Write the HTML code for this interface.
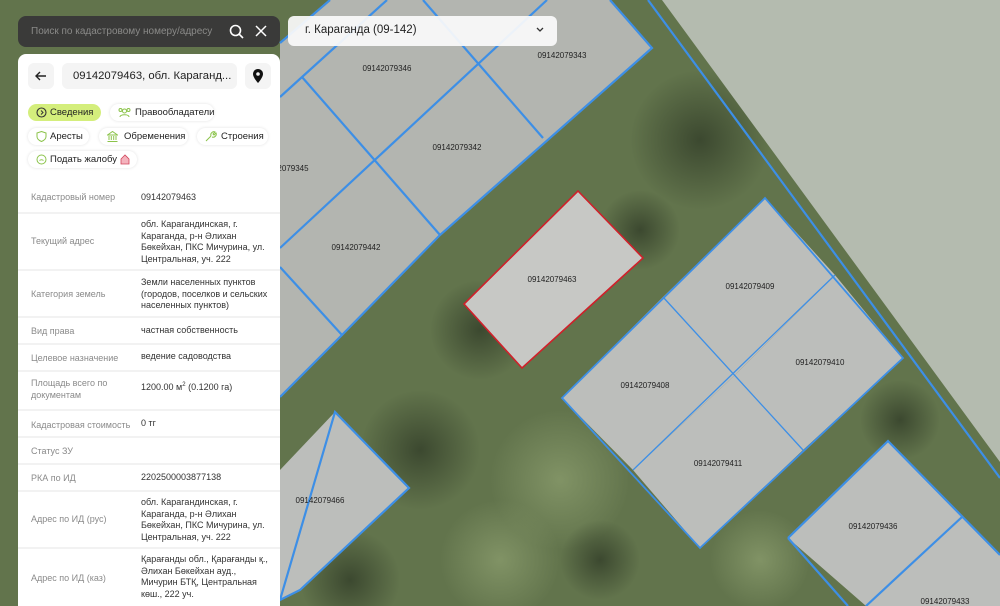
<!DOCTYPE html>
<html><head><meta charset="utf-8"><style>
*{margin:0;padding:0;box-sizing:border-box}
html,body{width:1000px;height:606px;overflow:hidden}
body{position:relative;font-family:"Liberation Sans",sans-serif;background:#5f7049}
#map{position:absolute;left:0;top:0}
.search{position:absolute;left:18px;top:16px;width:262px;height:31px;background:#3a3a39;border-radius:8px}
.search span{position:absolute;left:13px;top:10px;font-size:10px;color:#8a8a88}
.dd{position:absolute;left:288px;top:16px;width:269px;height:30px;background:rgba(250,250,250,.93);border-radius:6px}
.dd span{position:absolute;left:17px;top:8px;font-size:11.5px;color:#222}
.panel{position:absolute;left:18px;top:54px;width:262px;height:552px;background:#fff;border-radius:8px 8px 0 0;overflow:hidden}
.btn{position:absolute;top:9px;height:26px;background:#f4f4f4;border-radius:6px}
.title{position:absolute;left:44px;top:9px;width:175px;height:26px;background:#f4f4f4;border-radius:6px;font-size:11.3px;color:#1e1e1e;line-height:26px;padding-left:11px;white-space:nowrap;overflow:hidden}
.chip{position:absolute;height:17px;border-radius:9px;background:#fff;box-shadow:0 0 3px rgba(0,0,0,.12);font-size:9.5px;color:#222;line-height:17px;padding-left:22px;white-space:nowrap}
.chip svg{position:absolute;left:8px;top:3px}
.row{position:absolute;left:0;width:262px;border-top:2px solid #f2f2f2;font-size:9px;line-height:11.5px}
.row .l{position:absolute;left:13px;color:#8a8a8a}
.row .v{position:absolute;left:123px;width:132px;color:#333}
.lbl{font-size:8px;fill:#222;font-family:"Liberation Sans",sans-serif}
</style></head><body>
<svg id="map" width="1000" height="606" viewBox="0 0 1000 606">
<defs>
<radialGradient id="dk"><stop offset="0" stop-color="#2f3a26" stop-opacity=".75"/><stop offset="1" stop-color="#2f3a26" stop-opacity="0"/></radialGradient>
<radialGradient id="lt"><stop offset="0" stop-color="#8ea070" stop-opacity=".7"/><stop offset="1" stop-color="#8ea070" stop-opacity="0"/></radialGradient>
</defs>
<rect width="1000" height="606" fill="#62744c"/>
<circle cx="700" cy="140" r="70" fill="url(#dk)"/>
<circle cx="480" cy="330" r="50" fill="url(#dk)"/>
<circle cx="420" cy="450" r="60" fill="url(#dk)"/>
<circle cx="560" cy="480" r="70" fill="url(#lt)"/>
<circle cx="500" cy="560" r="60" fill="url(#lt)"/>
<circle cx="640" cy="230" r="40" fill="url(#dk)"/>
<circle cx="350" cy="580" r="50" fill="url(#dk)"/>
<circle cx="760" cy="560" r="50" fill="url(#lt)"/>
<circle cx="600" cy="560" r="40" fill="url(#dk)"/>
<circle cx="900" cy="420" r="40" fill="url(#dk)"/>
<polygon points="662,0 1000,0 1000,462" fill="#b4bbaf"/>
<polygon points="330,0 610,0 652,48 440,235 342,335 280,397 280,43" fill="#b3b5b0"/>
<polygon points="765,198 835,275 735,375 663,297" fill="#bcbebb"/>
<polygon points="835,275 903,358 803,450 735,375" fill="#bcbebb"/>
<polygon points="663,297 735,375 633,470 562,398" fill="#bcbebb"/>
<polygon points="735,375 803,450 700,548 633,470" fill="#bcbebb"/>
<polygon points="888,441 962,517 866,606 788,538" fill="#bcbebb"/>
<polygon points="962,517 1000,555 1000,606 866,606" fill="#bcbebb"/>
<polygon points="335,412 409,488 300,590 280,600 280,470" fill="#bcbebb"/>
<polygon points="578,191 643,258 522,368 464,304" fill="#c7c8c5" stroke="#d0202a" stroke-width="1.6"/>
<g stroke="#3d8fe6" fill="none" stroke-width="2.2">
<line x1="648" y1="0" x2="1000" y2="478"/>
<polyline points="610,0 652,48 440,235 342,335 280,397"/>
<line x1="280" y1="43" x2="330" y2="0"/>
<line x1="302" y1="77" x2="440" y2="235"/>
<line x1="423" y1="0" x2="543" y2="138"/>
<line x1="280" y1="267" x2="342" y2="335"/>
<line x1="280" y1="97" x2="387" y2="0"/>
<line x1="280" y1="248" x2="547" y2="0"/>
<polygon points="335,412 409,488 300,590 280,600"/>
<polygon points="765,198 903,358 700,548 562,398" stroke-width="1.8"/>
<line x1="663" y1="297" x2="803" y2="450" stroke-width="1.3"/>
<line x1="835" y1="275" x2="633" y2="470" stroke-width="1.3"/>
<polyline points="788,538 888,441 1000,555"/>
<line x1="962" y1="517" x2="866" y2="606"/>
<line x1="788" y1="538" x2="848" y2="606"/>
</g>
<g class="lbl" text-anchor="middle">
<text x="387" y="71">09142079346</text>
<text x="562" y="58">09142079343</text>
<text x="457" y="150">09142079342</text>
<text x="293" y="171">2079345</text>
<text x="356" y="250">09142079442</text>
<text x="552" y="282">09142079463</text>
<text x="750" y="289">09142079409</text>
<text x="820" y="365">09142079410</text>
<text x="645" y="388">09142079408</text>
<text x="718" y="466">09142079411</text>
<text x="320" y="503">09142079466</text>
<text x="873" y="529">09142079436</text>
<text x="945" y="604">09142079433</text>
</g>
</svg>

<div class="search"><span>Поиск по кадастровому номеру/адресу</span>
<svg style="position:absolute;left:211px;top:8px" width="15" height="15" viewBox="0 0 15 15"><circle cx="6.5" cy="6.5" r="5" stroke="#fff" stroke-width="1.6" fill="none"/><line x1="10.2" y1="10.2" x2="14" y2="14" stroke="#fff" stroke-width="1.6"/></svg>
<svg style="position:absolute;left:237px;top:9px" width="12" height="12" viewBox="0 0 12 12"><path d="M1 1L11 11M11 1L1 11" stroke="#fff" stroke-width="1.5"/></svg>
</div>
<div class="dd"><span>г. Караганда (09-142)</span>
<svg style="position:absolute;left:248px;top:11px" width="8" height="6" viewBox="0 0 8 6"><path d="M1 1L4 4L7 1" stroke="#333" stroke-width="1.3" fill="none"/></svg></div>

<div class="panel">
<div class="btn" style="left:10px;width:26px"><svg style="position:absolute;left:7px;top:8px" width="12" height="10" viewBox="0 0 12 10"><path d="M11 5H1.5M5 1L1 5L5 9" stroke="#222" stroke-width="1.4" fill="none"/></svg></div>
<div class="title">09142079463, обл. Караганд...</div>
<div class="btn" style="left:227px;width:26px"><svg style="position:absolute;left:8px;top:6px" width="10" height="14" viewBox="0 0 10 14"><path d="M5 0C2.2 0 0 2.2 0 5C0 8.5 5 14 5 14C5 14 10 8.5 10 5C10 2.2 7.8 0 5 0Z" fill="#111"/><circle cx="5" cy="5" r="1.8" fill="#f4f4f4"/></svg></div>

<div class="chip" style="left:10px;top:50px;width:73px;background:#d4ee7c;box-shadow:none">Сведения<svg width="11" height="11"><circle cx="5.5" cy="5.5" r="4.5" stroke="#333" fill="none" stroke-width="1.1"/><path d="M5 3.5L7 5.5L5 7.5" stroke="#333" fill="none"/></svg></div>
<div class="chip" style="left:92px;top:50px;width:104px;padding-left:25px">Правообладатели<svg width="13" height="11"><circle cx="6.5" cy="4" r="2" fill="none" stroke="#8bc34a"/><circle cx="2.5" cy="3" r="1.5" fill="none" stroke="#8bc34a"/><circle cx="10.5" cy="3" r="1.5" fill="none" stroke="#8bc34a"/><path d="M2 10C2 7 11 7 11 10" stroke="#8bc34a" fill="none"/></svg></div>
<div class="chip" style="left:10px;top:74px;width:61px">Аресты<svg width="11" height="11"><path d="M5.5 0.5L10 2V5.5C10 8 8 9.5 5.5 10.5C3 9.5 1 8 1 5.5V2Z" stroke="#8bc34a" fill="none"/></svg></div>
<div class="chip" style="left:81px;top:74px;width:89px;padding-left:25px">Обременения<svg width="11" height="11"><path d="M0.5 4L5.5 0.5L10.5 4ZM2 5V9M4.3 5V9M6.7 5V9M9 5V9M0.5 10.5H10.5" stroke="#8bc34a" fill="none"/></svg></div>
<div class="chip" style="left:179px;top:74px;width:71px;padding-left:24px">Строения<svg width="12" height="11"><path d="M1 10L6 5M6 5C5 2 8 0 10 1L8 3L9 4L11 2C12 4 10 7 7 6" stroke="#8bc34a" fill="none"/></svg></div>
<div class="chip" style="left:10px;top:97px;width:109px">Подать жалобу<svg width="11" height="11"><circle cx="5.5" cy="5.5" r="4.5" stroke="#8bc34a" fill="none"/><path d="M3.5 6.5Q5.5 5 7.5 6.5" stroke="#8bc34a" fill="none"/></svg><svg style="left:92px;top:3px" width="10" height="11"><path d="M1 5L5 1L9 5V10H1Z" fill="#f4b3bd" stroke="#d1455b" stroke-width=".8"/></svg></div>

<div class="row" style="top:124px;height:34px;border-top:none"><span class="l" style="top:14px">Кадастровый номер</span><span class="v" style="top:14px">09142079463</span></div>
<div class="row" style="top:158px;height:57px"><span class="l" style="top:22px">Текущий адрес</span><span class="v" style="top:5px">обл. Карагандинская, г. Караганда, р-н Әлихан Бөкейхан, ПКС Мичурина, ул. Центральная, уч. 222</span></div>
<div class="row" style="top:215px;height:47px"><span class="l" style="top:18px">Категория земель</span><span class="v" style="top:6px">Земли населенных пунктов (городов, поселков и сельских населенных пунктов)</span></div>
<div class="row" style="top:262px;height:27px"><span class="l" style="top:8px">Вид права</span><span class="v" style="top:7px">частная собственность</span></div>
<div class="row" style="top:289px;height:27px"><span class="l" style="top:8px">Целевое назначение</span><span class="v" style="top:6px">ведение садоводства</span></div>
<div class="row" style="top:316px;height:39px"><span class="l" style="top:6px;width:100px">Площадь всего по документам</span><span class="v" style="top:8px">1200.00 м<sup style="font-size:6px">2</sup> (0.1200 га)</span></div>
<div class="row" style="top:355px;height:27px"><span class="l" style="top:9px">Кадастровая стоимость</span><span class="v" style="top:7px">0 тг</span></div>
<div class="row" style="top:382px;height:27px"><span class="l" style="top:8px">Статус ЗУ</span></div>
<div class="row" style="top:409px;height:27px"><span class="l" style="top:8px">РКА по ИД</span><span class="v" style="top:7px">2202500003877138</span></div>
<div class="row" style="top:436px;height:57px"><span class="l" style="top:22px">Адрес по ИД (рус)</span><span class="v" style="top:5px">обл. Карагандинская, г. Караганда, р-н Әлихан Бөкейхан, ПКС Мичурина, ул. Центральная, уч. 222</span></div>
<div class="row" style="top:493px;height:70px"><span class="l" style="top:24px">Адрес по ИД (каз)</span><span class="v" style="top:5px">Қарағанды обл., Қарағанды қ., Әлихан Бөкейхан ауд., Мичурин БТҚ, Центральная көш., 222 уч.</span></div>
</div>
</body></html>
